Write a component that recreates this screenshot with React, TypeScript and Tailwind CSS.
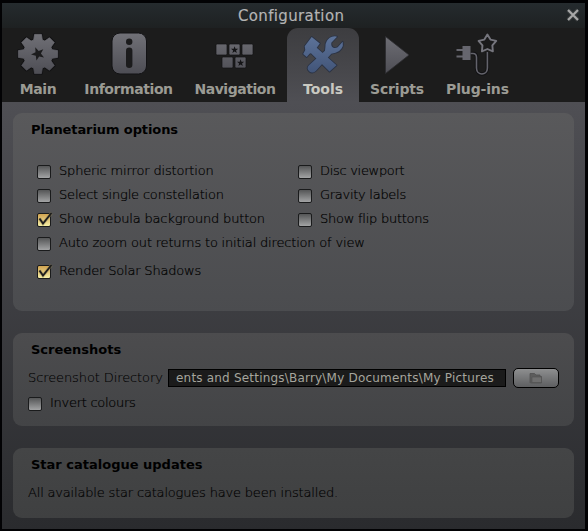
import React from "react";

const star = (cx: number, cy: number, R: number, r: number, rot = -90) =>
  Array.from({ length: 10 }, (_, i) => {
    const a = ((rot + i * 36) * Math.PI) / 180;
    const q = i % 2 ? r : R;
    return `${(cx + q * Math.cos(a)).toFixed(2)},${(cy + q * Math.sin(a)).toFixed(2)}`;
  }).join(" ");

// Eight-toothed gear outline: each tooth contributes two root and two tip corners.
const gear = (cx: number, cy: number) =>
  Array.from({ length: 8 }, (_, i) => {
    const a = (i * Math.PI) / 4;
    return [[14, -4.3], [19.6, -3.4], [19.6, 3.4], [14, 4.3]]
      .map(([x, y]) => `${(cx + x * Math.cos(a) - y * Math.sin(a)).toFixed(2)},${(cy + x * Math.sin(a) + y * Math.cos(a)).toFixed(2)}`)
      .join(" ");
  }).join(" ");

function Defs() {
  return (
    <svg className="absolute h-0 w-0">
      <defs>
        <linearGradient id="metal" gradientUnits="userSpaceOnUse" x1="0" y1="4" x2="0" y2="46">
          <stop offset="0" stopColor="#727278" />
          <stop offset="1" stopColor="#4d4d54" />
        </linearGradient>
        <linearGradient id="blue" gradientUnits="userSpaceOnUse" x1="0" y1="8" x2="0" y2="44">
          <stop offset="0" stopColor="#5d7399" />
          <stop offset="1" stopColor="#425579" />
        </linearGradient>
      </defs>
    </svg>
  );
}

function MainIcon() {
  return (
    <svg width="48" height="50" viewBox="0 0 48 50">
      <polygon points={gear(24, 26)} fill="none" stroke="#121214" strokeWidth="2.600" strokeLinejoin="round" />
      <polygon points={gear(24, 26)} fill="url(#metal)" stroke="url(#metal)" strokeWidth=".8" strokeLinejoin="round" />
      <polygon points={star(24, 25.800, 7, 2.900, -113)} fill="#1c1c1d" />
    </svg>
  );
}

function InfoIcon() {
  return (
    <svg width="48" height="50" viewBox="0 0 48 50">
      <rect x="7" y="5" width="34.500" height="41" rx="8" fill="url(#metal)" stroke="#121214" strokeWidth="1" />
      <circle cx="24.200" cy="13.700" r="3.200" fill="#1b1b1c" />
      <rect x="21" y="19.500" width="6.400" height="20.500" rx="3.200" fill="#1b1b1c" />
    </svg>
  );
}

function NavIcon() {
  return (
    <svg width="48" height="50" viewBox="0 0 48 50">
      <g fill="url(#metal)" stroke="#121214" strokeWidth=".7">
        <rect x="5" y="16" width="11" height="11" rx="1.200" />
        <rect x="18" y="16" width="11" height="11" rx="1.200" />
        <rect x="31" y="16" width="11" height="11" rx="1.200" />
        <rect x="11" y="29" width="11" height="11" rx="1.200" />
        <rect x="24" y="29" width="11" height="11" rx="1.200" />
      </g>
      <polygon points={star(23.600, 22, 3.800, 1.500)} fill="#141416" />
      <polygon points={star(29.600, 35, 3.800, 1.500)} fill="#141416" />
    </svg>
  );
}

const hammer = "M12.700 9L20.800 15.400L17.700 19.800L37.500 37.300L30.500 43.600L12 25.200L10.800 25.400L7.700 29L4.200 26L6.300 22L5.700 18.300z";
const wrench =
  "M38 8.700L32.300 14.700Q31.800 18.500 34.300 19.800Q36.800 20.400 38.700 19.300L43.700 13.800Q44.500 18 42.500 20.500Q40 24.200 36.500 24.700L32.300 25.700L17 42.700Q13.500 46 10.500 43.500Q7 40.500 10 37.300L26 22.700Q26.500 19 26.600 16Q28 10.500 33 8.800Q36 8 38 8.700z";

function ToolsIcon() {
  return (
    <svg width="48" height="50" viewBox="0 0 48 50">
      <g fill="none" stroke="#2b3344" strokeWidth="1.800" strokeLinejoin="round">
        <path d={hammer} />
        <path d={wrench} />
      </g>
      <g fill="url(#blue)">
        <path d={hammer} />
        <path d={wrench} />
      </g>
    </svg>
  );
}

function ScriptsIcon() {
  return (
    <svg width="48" height="50" viewBox="0 0 48 50">
      <path d="M12.500 8.500v37L36 27z" fill="url(#metal)" stroke="#2c2c30" strokeWidth=".8" />
    </svg>
  );
}

function PluginsIcon() {
  return (
    <svg width="48" height="50" viewBox="0 0 48 50">
      <path d="M16.500 25.500h2.500c3 0 3.500 1.500 3.500 4v10.500c0 8 10.900 8 10.900 0V24" fill="none" stroke="#111113" strokeWidth="3.400" />
      <g fill="none" stroke="#63636b" strokeWidth="1.600" strokeLinejoin="round">
        <path d="M16.500 25.500h2.500c3 0 3.500 1.500 3.500 4v10.500c0 8 10.900 8 10.900 0V24" />
        <polygon points={star(33.400, 15.800, 9.300, 5.200)} fill="#1a1a1b" stroke="#75757d" strokeWidth="1.900" />
      </g>
      <path d="M2.500 21h6v-3h8v14h-8V29.500h-6v-2h6V23h-6z" fill="#66666e" />
    </svg>
  );
}

function Tab({ label, icon, w, ls, active }: { label: string; icon: React.ReactNode; w: string; ls: string; active?: boolean }) {
  return (
    <div className={`flex h-[74px] shrink-0 flex-col items-center rounded-t-[11px] ${w} ${active ? "bg-linear-to-b from-[#3d3d40] to-[#4f4f54] text-[#c9c9c1]" : "text-[#9b9b94]"}`}>
      <div className="h-[50px]">{icon}</div>
      <span className={`whitespace-nowrap text-[14px] leading-[22px] font-bold ${ls}`}>{label}</span>
    </div>
  );
}

function Check({ label, on, className = "" }: { label: string; on?: boolean; className?: string }) {
  return (
    <label className={`flex h-6 items-center whitespace-nowrap ${className}`}>
      <span className={`relative mt-[2px] mr-2 size-[14px] shrink-0 rounded-[2px] border border-[#1a1b1c] bg-linear-to-b ${on ? "from-[#d0a350] to-[#f5efa5]" : "from-[#555657] to-[#a3a4a5]"}`}>
        {on && (
          <svg className="absolute -top-[3px] -left-[1px]" width="17" height="17" viewBox="0 0 17 17">
            <path d="M2.500 7.500l3.500 5L14.500 2" fill="none" stroke="#8f8256" strokeWidth="3.200" strokeOpacity=".5" />
            <path d="M2.500 7.500l3.500 5L14.500 2" fill="none" stroke="#1c1c1c" strokeWidth="1.800" />
          </svg>
        )}
      </span>
      <span className="[-webkit-text-stroke:0.2px_#000]">{label}</span>
    </label>
  );
}

const panel = "shrink-0 rounded-[9px] bg-linear-to-b";

export default function App() {
  return (
    <div className="h-[531px] w-[588px] overflow-hidden bg-[#020204] pt-[3px] pr-[3px] pl-[2px] font-['DejaVu_Sans',sans-serif] text-[13px] font-extralight tracking-[-0.18px] text-black">
      <Defs />
      <div className="flex h-[526px] flex-col bg-[#1c1c1c]">
        <header className="flex h-[25px] shrink-0 items-center bg-linear-to-b from-[#252b2e] to-[#1e2122] pr-[4px] text-[#b4b4b4]">
          <h1 className="ml-[236px] flex-1 text-[15px] leading-6 font-normal tracking-[0.35px] [-webkit-text-stroke:0.15px_#b4b4b4]">
            Configuration
          </h1>
          <svg className="mb-px" width="16" height="16" viewBox="0 0 16 16">
            <path d="M3 3l10 10M13 3L3 13" stroke="#55595a" strokeWidth="4" strokeOpacity=".5" />
            <path d="M3 3l10 10M13 3L3 13" stroke="#a8a8a8" strokeWidth="2" />
          </svg>
        </header>
        <nav className="flex h-[74px] shrink-0">
          <Tab label="Main" icon={<MainIcon />} w="w-[72px]" ls="tracking-[-0.4px]" />
          <Tab label="Information" icon={<InfoIcon />} w="w-[109px]" ls="tracking-[-0.42px]" />
          <Tab label="Navigation" icon={<NavIcon />} w="w-[104px]" ls="tracking-[-0.45px]" />
          <Tab label="Tools" icon={<ToolsIcon />} w="w-[72px]" ls="tracking-normal" active />
          <Tab label="Scripts" icon={<ScriptsIcon />} w="w-[76px]" ls="tracking-[-0.15px]" />
          <Tab label="Plug-ins" icon={<PluginsIcon />} w="w-[85px]" ls="tracking-[-0.15px]" />
        </nav>
        <main className="flex h-[427px] flex-col gap-[22px] bg-linear-to-b from-[#4f4f54] to-[#2a2b2e] px-[11px] pt-[11px]">
          <section className={`${panel} h-[198px] from-[#59595b] to-[#4b4c4f]`}>
            <h2 className="pt-[7px] pl-[18px] leading-5 font-bold tracking-[-0.1px]">Planetarium options</h2>
            <div className="mt-[19px] grid grid-cols-[261px_1fr] pl-[24px]">
              <Check label="Spheric mirror distortion" />
              <Check label="Disc viewport" className="tracking-[-0.3px]" />
              <Check label="Select single constellation" />
              <Check label="Gravity labels" className="tracking-[-0.28px]" />
              <Check label="Show nebula background button" on />
              <Check label="Show flip buttons" className="tracking-[-0.25px]" />
              <Check label="Auto zoom out returns to initial direction of view" className="col-span-2" />
            </div>
            <div className="mt-1 pl-[24px]">
              <Check label="Render Solar Shadows" on />
            </div>
          </section>
          <section className={`${panel} h-[93px] from-[#4c4c4e] to-[#434446]`}>
            <h2 className="pt-[7px] pl-[18px] leading-5 font-bold tracking-normal">Screenshots</h2>
            <div className="mt-[8px] flex h-5 items-center pl-[15px]">
              <span className="w-[140px] tracking-[-0.1px] whitespace-nowrap [-webkit-text-stroke:0.1px_#000]">Screenshot Directory</span>
              <div className="flex h-[18px] w-[338px] items-center border border-black bg-[#1b1b1b] pl-[7px] text-[12px] font-normal tracking-[0.2px] whitespace-nowrap text-[#a5a59d]">
                ents and Settings\Barry\My Documents\My Pictures
              </div>
              <button className="ml-[7px] flex h-5 w-[46px] items-center justify-center rounded-[5px] border border-black bg-linear-to-b from-[#8e8f90] to-[#5e5f61]">
                <svg width="14" height="12" viewBox="0 0 14 12">
                  <path d="M1 10.500V1.500h4.500L7 3h4v1.500h1.500V11H1.500z" fill="#5c5c5c" stroke="#505050" strokeWidth=".8" />
                  <path d="M3 10.500V5h9.500v5.500z" fill="#6e6e6e" stroke="#505050" strokeWidth=".6" />
                </svg>
              </button>
            </div>
            <div className="mt-[3px] pl-[15px]">
              <Check label="Invert colours" className="tracking-[-0.28px]" />
            </div>
          </section>
          <section className={`${panel} h-[70px] from-[#444546] to-[#3f4041]`}>
            <h2 className="pt-[7px] pl-[18px] leading-5 font-bold tracking-normal">Star catalogue updates</h2>
            <p className="pt-[8px] pl-[15px] leading-5 [-webkit-text-stroke:0.15px_#000]">All available star catalogues have been installed.</p>
          </section>
        </main>
      </div>
    </div>
  );
}
